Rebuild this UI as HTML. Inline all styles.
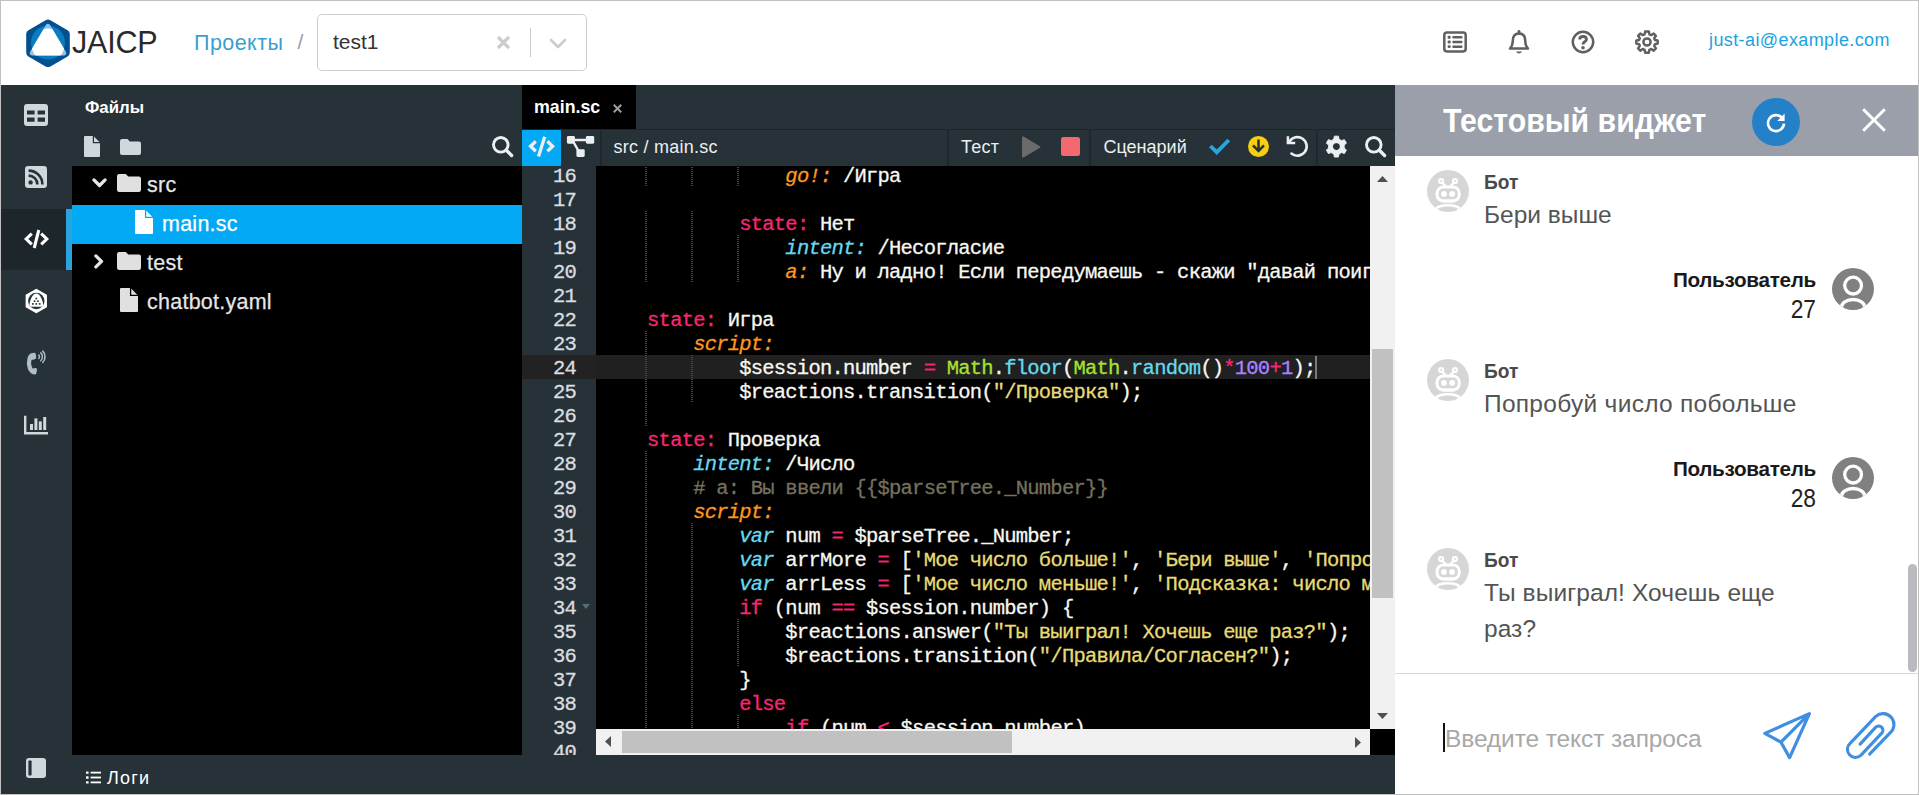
<!DOCTYPE html>
<html lang="ru">
<head>
<meta charset="utf-8">
<title>JAICP</title>
<style>
*{box-sizing:border-box;margin:0;padding:0}
html,body{width:1919px;height:795px;overflow:hidden;background:#fff}
body{position:relative;font-family:"Liberation Sans",sans-serif;color:#fff}
.abs{position:absolute}
svg{display:block;position:absolute;overflow:visible}
/* frame */
#frame{left:0;top:0;width:1919px;height:795px;border:1px solid #c1c1c1;pointer-events:none;z-index:50}
/* header */
#hdr{left:1px;top:1px;width:1917px;height:84px;background:#fff}
#brand{left:72px;top:22px;font-size:30.5px;line-height:40px;color:#2a2a2a;letter-spacing:-.2px}
#proj{left:194px;top:27.6px;font-size:21.5px;line-height:30px;color:#3a9fd0;letter-spacing:.45px}
#slash{left:297.5px;top:27px;font-size:21px;line-height:30px;color:#9aa0a5}
#sel{left:317px;top:14px;width:270px;height:57px;border:1px solid #ccc;border-radius:5px;background:#fff}
#selv{left:333px;top:27px;font-size:21px;line-height:30px;color:#333}
#selsep{left:530px;top:28px;width:1px;height:29px;background:#ccc}
#mail{left:1709px;top:27px;font-size:18px;line-height:26px;color:#1aa3e0;letter-spacing:.4px}
/* dark */
#dark{left:1px;top:85px;width:1394px;height:709px;background:#263238}
#navact{left:1px;top:209px;width:70px;height:61px;background:#1d262b}
#navbar{left:66px;top:209px;width:6px;height:61px;background:#2ba4dd}
#files{left:72px;top:166px;width:450px;height:589px;background:#000}
#ftitle{left:85px;top:95.7px;font-size:16.8px;font-weight:bold;line-height:24px;color:#fff}
#fsel{left:72px;top:205px;width:450px;height:39px;background:#03a9f4}
.fn{font-size:21.5px;line-height:28px;color:#e6e6e6;letter-spacing:.25px;-webkit-text-stroke:.25px}
/* editor */
#tab{left:522px;top:85px;width:114px;height:44px;background:#000}
#tabt{left:534px;top:95px;font-size:17.8px;font-weight:bold;line-height:24px;color:#fff}
#tabx{left:611px;top:96px;font-size:17px;line-height:24px;color:#9aa}
#tbline{left:522px;top:129px;width:873px;height:1px;background:#1c2529}
#codebtn{left:522px;top:130px;width:39px;height:36px;background:#03a9f4}
.tsep{top:130px;width:1.5px;height:36px;background:#1e282d}
.tt{top:134px;font-size:18px;line-height:26px;color:#eceff1;letter-spacing:.25px}
#ed{left:522px;top:166px;width:848px;height:589px;background:#000;overflow:hidden}
#gut{left:0;top:0;width:74px;height:589px;background:#263238}
#actg{left:0;top:189px;width:74px;height:24px;background:#222}
#actl{left:74px;top:189px;width:774px;height:24px;background:#202020}
pre{font-family:"Liberation Mono",monospace;font-size:20.5px;line-height:24px;letter-spacing:-.78px;white-space:pre;-webkit-text-stroke:.3px}
#nums{left:0;top:-.6px;width:54px;text-align:right;color:#d9dde0}
#code{left:79px;top:-.6px;color:#f8f8f2}
.k{color:#f92672}.i{color:#66d9ef;font-style:italic}.o{color:#fd971f;font-style:italic}
.s{color:#e6db74}.g{color:#a6e22e}.f{color:#66d9ef}.n{color:#ae81ff}.c{color:#75715e}
.ig{width:2px;margin-left:-.6px;background-image:linear-gradient(#45453c 50%,transparent 50%);background-size:2px 2px}
/* scrollbars */
#vsb{left:1370px;top:166px;width:25px;height:563px;background:#f1f1f1}
#vth{left:1372px;top:349px;width:21px;height:249px;background:#c1c1c1}
#hsb{left:596px;top:729px;width:774px;height:26px;background:#f1f1f1}
#hth{left:622px;top:731px;width:390px;height:22px;background:#c1c1c1}
#corner{left:1370px;top:729px;width:25px;height:26px;background:#000}
#logs{left:107px;top:764.8px;font-size:18px;line-height:26px;color:#fff;letter-spacing:1.2px}
/* widget */
#wg{left:1395px;top:85px;width:523px;height:709px;background:#fff}
#wgh{left:1395px;top:85px;width:523px;height:71px;background:#9a9fa9}
#wgt{left:1443px;top:100px;font-size:34px;font-weight:bold;line-height:40px;color:#fff;transform:scaleX(.89);transform-origin:0 0;white-space:nowrap}
#rf{left:1752px;top:98px;width:48px;height:48px;border-radius:50%;background:#2481c8}
.bn{font-size:21px;font-weight:bold;line-height:24px;color:#4a4a4a;transform:scaleX(.912);transform-origin:0 0}
.bm{font-size:24.5px;line-height:36px;color:#545454;letter-spacing:0;white-space:nowrap}
.un{font-size:20.7px;font-weight:bold;line-height:24px;color:#1a1a1a;text-align:right;width:300px;letter-spacing:-.3px}
.um{font-size:25px;line-height:30px;color:#222;text-align:right;width:300px;transform:scaleX(.91);transform-origin:100% 0}
.av{width:42px;height:42px;border-radius:50%}
#inline{left:1395px;top:673px;width:523px;height:1px;background:#d9d9d9}
#ph{left:1445px;top:722.7px;font-size:24.5px;line-height:32px;color:#a8a8a8;letter-spacing:-.1px}
#caret{left:1443px;top:723px;width:2px;height:29px;background:#111}
#wsb{left:1908px;top:564px;width:9px;height:108px;border-radius:5px;background:#b9bbc0}
</style>
</head>
<body>
<div class="abs" id="hdr"></div>
<!-- logo -->
<svg class="abs" style="left:24px;top:17px" width="48" height="52" viewBox="24 17 48 52">
<defs><clipPath id="tri"><path d="M48 21.4 L68 55.5 L28 55.5 Z"/></clipPath></defs>
<path d="M45.6 20.2 Q48 18.8 50.4 20.2 L67.6 30.2 Q69.8 31.5 69.8 34 L69.8 52.6 Q69.8 55.2 67.6 56.5 L50.4 66.4 Q48 67.8 45.6 66.4 L28.4 56.5 Q26.2 55.2 26.2 52.6 L26.2 34 Q26.2 31.5 28.4 30.2 Z" fill="#02508f"/>
<circle cx="48" cy="42.6" r="17" fill="#0b7cc0"/>
<path d="M48 26.4 L63.7 53 L32.3 53 Z" fill="#90c3ec" stroke="#90c3ec" stroke-width="5" stroke-linejoin="round"/>
<circle cx="48" cy="45" r="16.4" fill="#fff" clip-path="url(#tri)"/>
</svg>
<div class="abs" id="brand">JAICP</div>
<div class="abs" id="proj">Проекты</div>
<div class="abs" id="slash">/</div>
<div class="abs" id="sel"></div>
<div class="abs" id="selv">test1</div>
<svg class="abs" style="left:496px;top:35px" width="15" height="15" viewBox="0 0 15 15"><path d="M2 2 L13 13 M13 2 L2 13" stroke="#ccc" stroke-width="3.2" fill="none"/></svg>
<div class="abs" id="selsep"></div>
<svg class="abs" style="left:549px;top:38px" width="18" height="11" viewBox="0 0 18 11"><path d="M2 2 L9 9 L16 2" stroke="#ccc" stroke-width="2.6" fill="none" stroke-linecap="round" stroke-linejoin="round"/></svg>
<!-- header icons -->
<svg class="abs" style="left:1443px;top:31px" width="24" height="22" viewBox="0 0 24 22"><rect x="1.3" y="1.6" width="21.4" height="18.8" rx="2.6" fill="none" stroke="#606060" stroke-width="2.5"/><g fill="#606060"><rect x="4.6" y="4.8" width="3.1" height="2.9" rx="1"/><rect x="4.6" y="9.5" width="3.1" height="2.9" rx="1"/><rect x="4.6" y="14.2" width="3.1" height="2.9" rx="1"/><rect x="9.3" y="5" width="10.2" height="2.5" rx="1"/><rect x="9.3" y="9.7" width="10.2" height="2.5" rx="1"/><rect x="9.3" y="14.4" width="10.2" height="2.5" rx="1"/></g></svg>
<svg class="abs" style="left:1508px;top:30px" width="22" height="26" viewBox="0 0 22 26"><path d="M11 3.4 C6.6 3.4 4.8 6.8 4.8 10.8 C4.8 14.8 3.8 16.6 2 18.6 L20 18.6 C18.2 16.6 17.2 14.8 17.2 10.8 C17.2 6.8 15.4 3.4 11 3.4 Z" fill="none" stroke="#606060" stroke-width="2.5" stroke-linejoin="round"/><path d="M11 1.3 L11 3" stroke="#606060" stroke-width="2.8" stroke-linecap="round"/><path d="M7.8 21.4 H14.2 Q11 25.6 7.8 21.4 Z" fill="#606060"/></svg>
<svg class="abs" style="left:1571px;top:30px" width="24" height="24" viewBox="0 0 24 24"><circle cx="12" cy="12" r="10.2" fill="none" stroke="#606060" stroke-width="2.5"/><path d="M8.7 9.4 C8.7 5.6 15.4 5.6 15.4 9.4 C15.4 11.8 12 11.6 12 14.4" fill="none" stroke="#606060" stroke-width="2.9"/><circle cx="12" cy="17.7" r="1.8" fill="#606060"/></svg>
<svg class="abs" style="left:1635px;top:30px" width="24" height="24" viewBox="0 0 24 24"><path d="M10.2 1.4 L13.8 1.4 L14.4 4.3 L16.2 5.1 L18.7 3.5 L20.9 5.8 L19.2 8.2 L19.9 9.9 L22.7 10.4 L22.7 13.6 L19.9 14.2 L19.2 15.9 L20.9 18.4 L18.7 20.6 L16.2 19 L14.4 19.8 L13.8 22.7 L10.2 22.7 L9.6 19.8 L7.8 19 L5.3 20.6 L3.1 18.4 L4.8 15.9 L4.1 14.2 L1.3 13.6 L1.3 10.4 L4.1 9.9 L4.8 8.2 L3.1 5.8 L5.3 3.5 L7.8 5.1 L9.6 4.3 Z" fill="none" stroke="#606060" stroke-width="2.5" stroke-linejoin="round"/><circle cx="12" cy="12" r="3.6" fill="none" stroke="#606060" stroke-width="2.5"/></svg>
<div class="abs" id="mail">just-ai@example.com</div>
<div class="abs" id="dark"></div>
<div class="abs" id="navact"></div><div class="abs" id="navbar"></div>
<!-- nav icons -->
<svg style="left:24px;top:104px" width="24" height="22" viewBox="0 0 24 22"><path fill="#cfd8dc" fill-rule="evenodd" d="M3 0 H21 Q24 0 24 3 V19 Q24 22 21 22 H3 Q0 22 0 19 V3 Q0 0 3 0 Z M3 6.4 V10.4 H10.6 V6.4 Z M13.6 6.4 V10.4 H21 V6.4 Z M3 13.6 V17.8 H10.6 V13.6 Z M13.6 13.6 V17.8 H21 V13.6 Z"/></svg>
<svg style="left:25px;top:166px" width="22" height="22" viewBox="0 0 22 22"><rect width="22" height="22" rx="3.2" fill="#cfd8dc"/><circle cx="5.6" cy="16.4" r="2.2" fill="#263238"/><path d="M3.6 9.6 A8.8 8.8 0 0 1 12.4 18.4 M3.6 4.6 A13.8 13.8 0 0 1 17.4 18.4" fill="none" stroke="#263238" stroke-width="2.6"/></svg>
<svg style="left:24px;top:229px" width="25" height="20" viewBox="0 0 25 20"><path d="M7.8 4.6 L2.2 10 L7.8 15.4 M17.2 4.6 L22.8 10 L17.2 15.4 M14.8 1 L10.2 19" fill="none" stroke="#fff" stroke-width="3.1" stroke-linejoin="miter"/></svg>
<svg style="left:24.7px;top:288.9px" width="22.6" height="24" viewBox="0.4 0.4 23.2 25.2"><path d="M12 1.2 L22.2 7 L22.2 19 L12 24.8 L1.8 19 L1.8 7 Z" fill="#fff" stroke="#fff" stroke-width="2" stroke-linejoin="round"/><circle cx="12" cy="13" r="8.6" fill="#263238"/><path d="M12 5 C15.4 5 17.8 9.4 19.2 16.2 Q19.6 18.8 17 19 H7 Q4.4 18.8 4.8 16.2 C6.2 9.4 8.6 5 12 5 Z" fill="#fff"/><g fill="#263238"><rect x="11.1" y="9.6" width="1.8" height="1.7"/><rect x="9.3" y="12.4" width="1.8" height="1.7"/><rect x="12.9" y="12.4" width="1.8" height="1.7"/><rect x="7.5" y="15.2" width="1.8" height="1.7"/><rect x="11.1" y="15.2" width="1.8" height="1.7"/><rect x="14.7" y="15.2" width="1.8" height="1.7"/></g></svg>
<svg style="left:26px;top:350px" width="20" height="26" viewBox="0 0 20 26"><path d="M4.4 3.4 L8.2 2.8 Q9.6 2.8 9.8 4.2 L10.2 7.6 Q10.2 8.8 9 9.2 L5.6 10 Q4.2 14 6.6 18.4 L9.8 18 Q11 18.2 11 19.4 L10.4 23.2 Q10 24.8 8.4 24.6 Q4.2 23.8 2 19.2 Q0 13.8 1.4 8.2 Q2.2 4.8 4.4 3.4 Z" fill="#b0bec5"/><path d="M12.4 4.6 A2.8 2.8 0 0 1 12.4 9 M14.4 2.4 A5.8 5.8 0 0 1 14.4 11.2 M16.4 .6 A8.6 8.6 0 0 1 16.4 13" fill="none" stroke="#b0bec5" stroke-width="1.5"/></svg>
<svg style="left:24px;top:415px" width="24" height="20" viewBox="0 0 24 20"><path d="M1.2 .8 V18.2 H24" fill="none" stroke="#cfd8dc" stroke-width="2.4"/><g fill="#cfd8dc"><rect x="6" y="9" width="3" height="6"/><rect x="10.4" y="3.4" width="3" height="11.6"/><rect x="14.8" y="6.4" width="3" height="8.6"/><rect x="19.2" y="2" width="3" height="13"/></g></svg>
<svg style="left:26px;top:758px" width="20" height="20" viewBox="0 0 20 20"><rect width="20" height="20" rx="3" fill="#cfd8dc"/><rect x="2.4" y="2.4" width="3.2" height="15.2" rx=".8" fill="#263238"/></svg>
<!-- files panel -->
<div class="abs" id="files"></div>
<div class="abs" id="ftitle">Файлы</div>
<svg style="left:84px;top:136px" width="16" height="21" viewBox="0 0 16 21"><path d="M0 1 Q0 0 1 0 H9.4 L16 6.6 V20 Q16 21 15 21 H1 Q0 21 0 20 Z" fill="#cfd8dc"/><path d="M9.4 0 V6.6 H16" fill="none" stroke="#263238" stroke-width="1.2"/></svg>
<svg style="left:120px;top:139px" width="21" height="16" viewBox="0 0 21 16"><path d="M0 2 Q0 0 2 0 H7.6 L9.8 2.4 H19 Q21 2.4 21 4.4 V14 Q21 16 19 16 H2 Q0 16 0 14 Z" fill="#cfd8dc"/></svg>
<svg style="left:492px;top:135.6px" width="21" height="21" viewBox="0 0 21 21"><circle cx="8.8" cy="8.8" r="7.3" fill="none" stroke="#eceff1" stroke-width="2.9"/><path d="M14.3 14.3 L19.6 19.5" stroke="#eceff1" stroke-width="3.4" stroke-linecap="round"/></svg>
<div class="abs" id="fsel"></div>
<!-- tree -->
<svg style="left:91.5px;top:178.3px" width="15" height="10" viewBox="0 0 15 10"><path d="M1.9 1.9 L7.5 7.5 L13.1 1.9" fill="none" stroke="#e6e6e6" stroke-width="3.3" stroke-linecap="round" stroke-linejoin="round"/></svg>
<svg style="left:117px;top:174px" width="24" height="18" viewBox="0 0 24 18"><path d="M0 2.2 Q0 0 2.2 0 H8.8 L11.2 2.6 H21.8 Q24 2.6 24 4.8 V15.8 Q24 18 21.8 18 H2.2 Q0 18 0 15.8 Z" fill="#e0e0e0"/></svg>
<div class="abs fn" style="left:147px;top:171px">src</div>
<svg style="left:135px;top:210px" width="18" height="24" viewBox="0 0 18 24"><path d="M0 1 Q0 0 1 0 H10.6 L18 7.4 V23 Q18 24 17 24 H1 Q0 24 0 23 Z" fill="#fff"/><path d="M10.6 0 V7.4 H18" fill="none" stroke="#03a9f4" stroke-width="1.3"/></svg>
<div class="abs fn" style="left:162px;top:210px;color:#fff">main.sc</div>
<svg style="left:93.7px;top:254px" width="10" height="15" viewBox="0 0 10 15"><path d="M1.9 1.9 L7.5 7.4 L1.9 12.9" fill="none" stroke="#e6e6e6" stroke-width="3.3" stroke-linecap="round" stroke-linejoin="round"/></svg>
<svg style="left:117px;top:252px" width="24" height="18" viewBox="0 0 24 18"><path d="M0 2.2 Q0 0 2.2 0 H8.8 L11.2 2.6 H21.8 Q24 2.6 24 4.8 V15.8 Q24 18 21.8 18 H2.2 Q0 18 0 15.8 Z" fill="#e0e0e0"/></svg>
<div class="abs fn" style="left:147px;top:249px">test</div>
<svg style="left:120px;top:288px" width="18" height="24" viewBox="0 0 18 24"><path d="M0 1 Q0 0 1 0 H10.6 L18 7.4 V23 Q18 24 17 24 H1 Q0 24 0 23 Z" fill="#e0e0e0"/><path d="M10.6 0 V7.4 H18" fill="none" stroke="#000" stroke-width="1.3"/></svg>
<div class="abs fn" style="left:147px;top:288px">chatbot.yaml</div>
<!-- editor -->
<div class="abs" id="tab"></div>
<div class="abs" id="tabt">main.sc</div>
<svg style="left:613px;top:103.5px" width="9" height="9" viewBox="0 0 9 9"><path d="M.8 .8 L8.2 8.2 M8.2 .8 L.8 8.2" stroke="#9e9e9e" stroke-width="2" fill="none"/></svg>
<div class="abs" id="tbline"></div>
<div class="abs" id="codebtn"></div>
<div class="abs" id="ed">
<div class="abs" id="gut"></div>
<div class="abs" id="actg"></div><div class="abs" id="actl"></div>
<div class="abs ig" style="left:124px;top:-3px;height:24px"></div><div class="abs ig" style="left:124px;top:45px;height:72px"></div><div class="abs ig" style="left:124px;top:165px;height:96px"></div><div class="abs ig" style="left:124px;top:285px;height:312px"></div><div class="abs ig" style="left:170px;top:-3px;height:24px"></div><div class="abs ig" style="left:170px;top:45px;height:72px"></div><div class="abs ig" style="left:170px;top:189px;height:48px"></div><div class="abs ig" style="left:170px;top:357px;height:240px"></div><div class="abs ig" style="left:216px;top:-3px;height:24px"></div><div class="abs ig" style="left:216px;top:69px;height:48px"></div><div class="abs ig" style="left:216px;top:453px;height:48px"></div><div class="abs ig" style="left:216px;top:549px;height:48px"></div><div class="abs ig" style="left:262px;top:573px;height:24px"></div>
<pre class="abs" id="nums">16
17
18
19
20
21
22
23
24
25
26
27
28
29
30
31
32
33
34
35
36
37
38
39
40</pre>
<pre class="abs" id="code">                <span class="o">go!:</span> /Игра

            <span class="k">state:</span> Нет
                <span class="i">intent:</span> /Несогласие
                <span class="o">a:</span> Ну и ладно! Если передумаешь - скажи "давай поиграем"

    <span class="k">state:</span> Игра
        <span class="o">script:</span>
            $session.number <span class="k">=</span> <span class="g">Math</span>.<span class="f">floor</span>(<span class="g">Math</span>.<span class="f">random</span>()<span class="k">*</span><span class="n">100</span><span class="k">+</span><span class="n">1</span>);
            $reactions.transition(<span class="s">"/Проверка"</span>);

    <span class="k">state:</span> Проверка
        <span class="i">intent:</span> /Число
        <span class="c"># a: Вы ввели {{$parseTree._Number}}</span>
        <span class="o">script:</span>
            <span class="i">var</span> num <span class="k">=</span> $parseTree._Number;
            <span class="i">var</span> arrMore <span class="k">=</span> [<span class="s">'Мое число больше!'</span>, <span class="s">'Бери выше'</span>, <span class="s">'Попробуй число побольше'</span>];
            <span class="i">var</span> arrLess <span class="k">=</span> [<span class="s">'Мое число меньше!'</span>, <span class="s">'Подсказка: число меньше'</span>, <span class="s">'Попробуй число поменьше'</span>];
            <span class="k">if</span> (num <span class="k">==</span> $session.number) {
                $reactions.answer(<span class="s">"Ты выиграл! Хочешь еще раз?"</span>);
                $reactions.transition(<span class="s">"/Правила/Согласен?"</span>);
            }
            <span class="k">else</span>
                <span class="k">if</span> (num <span class="k">&lt;</span> $session.number)
                    $reactions.answer(selectRandomArg(arrMore));</pre>
<div class="abs" style="left:793px;top:190px;width:2px;height:23px;background:#7a7a7a"></div>
<svg style="left:60px;top:438px" width="8" height="5" viewBox="0 0 8 5"><path d="M0 0 H8 L4 5 Z" fill="#546e7a"/></svg>
</div>
<div class="abs" id="vsb"></div><div class="abs" id="vth"></div>
<div class="abs" id="hsb"></div><div class="abs" id="hth"></div>
<div class="abs" id="corner"></div>
<svg style="left:1377px;top:176px" width="11" height="6" viewBox="0 0 11 6"><path d="M0 6 L5.5 0 L11 6 Z" fill="#505050"/></svg>
<svg style="left:1377px;top:713px" width="11" height="6" viewBox="0 0 11 6"><path d="M0 0 L5.5 6 L11 0 Z" fill="#505050"/></svg>
<svg style="left:605px;top:736px" width="6" height="11" viewBox="0 0 6 11"><path d="M6 0 L0 5.5 L6 11 Z" fill="#505050"/></svg>
<svg style="left:1355px;top:737px" width="6" height="11" viewBox="0 0 6 11"><path d="M0 0 L6 5.5 L0 11 Z" fill="#505050"/></svg>
<!-- toolbar -->
<svg style="left:528px;top:136px" width="27" height="22" viewBox="0 0 27 22"><path d="M7.8 5.2 L2.6 10.2 L7.8 15.2 M19.4 5.2 L24.6 10.2 L19.4 15.2 M16.7 .8 L10.5 20.5" fill="none" stroke="#eceff1" stroke-width="3.3" stroke-linejoin="miter"/></svg>
<svg style="left:566px;top:136px" width="29" height="22" viewBox="0 0 29 22"><g fill="#eceff1"><rect x=".9" y="0" width="8" height="7.7" rx="1.4"/><rect x="19.9" y="0" width="8.3" height="7.7" rx="1.4"/><rect x="10.4" y="13.2" width="8.3" height="7.7" rx="1.4"/></g><path d="M8 4 H21 M7.8 6.6 L12.2 14.4" fill="none" stroke="#eceff1" stroke-width="2.3"/></svg>
<div class="abs tsep" style="left:600px"></div>
<div class="abs tt" style="left:613.5px">src / main.sc</div>
<div class="abs tsep" style="left:947px"></div>
<div class="abs tt" style="left:961px">Тест</div>
<svg style="left:1022px;top:136px" width="19" height="22" viewBox="0 0 19 22"><path d="M1.6 .6 L18 10.2 Q19 11 18 11.8 L1.6 21.4 Q0 22 0 20.4 V1.6 Q0 0 1.6 .6 Z" fill="#6b6b6b"/></svg>
<div class="abs" style="left:1061px;top:137px;width:19px;height:19px;border-radius:2.5px;background:#f4696f"></div>
<div class="abs tsep" style="left:1089px"></div>
<div class="abs tt" style="left:1103.5px;letter-spacing:0">Сценарий</div>
<svg style="left:1208px;top:138px" width="23" height="17" viewBox="0 0 23 17"><path d="M2.4 8 L8.8 14.2 L20.8 2" fill="none" stroke="#2ba6db" stroke-width="3.8"/></svg>
<svg style="left:1248.1px;top:135.7px" width="21" height="21" viewBox="0 0 21 21"><circle cx="10.5" cy="10.5" r="10.5" fill="#f7ce12"/><path d="M10.5 3.4 V14.6 M5 9.4 L10.5 15 L16 9.4" fill="none" stroke="#263238" stroke-width="2.5"/></svg>
<svg style="left:1286.2px;top:135.4px" width="22.8" height="22.8" viewBox="0 0 22.8 22.8"><path d="M3.51 6.47 A9.3 9.3 0 1 1 5.42 18.52" fill="none" stroke="#eceff1" stroke-width="2.6" stroke-linecap="round"/><path d="M1.9 1.2 V8.1 H9.2" fill="none" stroke="#eceff1" stroke-width="2.5" stroke-linecap="butt" stroke-linejoin="miter"/></svg>
<div class="abs tsep" style="left:1316px"></div>
<svg style="left:1325.8px;top:136px" width="21" height="21.4" viewBox="0 0 21 21.4"><path fill="#eceff1" fill-rule="evenodd" stroke="#eceff1" stroke-width="1" stroke-linejoin="round" d="M7.83 3.13 L8.38 0.19 L12.42 0.19 L12.97 3.13 L15.58 4.64 L18.40 3.65 L20.42 7.15 L18.15 9.09 L18.15 12.11 L20.42 14.05 L18.40 17.55 L15.58 16.56 L12.97 18.07 L12.42 21.01 L8.38 21.01 L7.83 18.07 L5.22 16.56 L2.40 17.55 L0.38 14.05 L2.65 12.11 L2.65 9.09 L0.38 7.15 L2.40 3.65 L5.22 4.64 Z M10.4 7 A3.6 3.6 0 1 0 10.4 14.2 A3.6 3.6 0 1 0 10.4 7 Z"/><circle cx="10.4" cy="10.6" r="3.3" fill="#263238"/></svg>
<svg style="left:1365.3px;top:136px" width="21" height="21" viewBox="0 0 21 21"><circle cx="8.8" cy="8.8" r="7.3" fill="none" stroke="#eceff1" stroke-width="2.9"/><path d="M14.3 14.3 L19.6 19.5" stroke="#eceff1" stroke-width="3.4" stroke-linecap="round"/></svg>
<!-- logs -->
<svg style="left:86px;top:771px" width="15" height="13" viewBox="0 0 15 13"><g fill="#fff"><rect x="0" y=".4" width="2.6" height="2.4" rx=".5"/><rect x="0" y="5.3" width="2.6" height="2.4" rx=".5"/><rect x="0" y="10.2" width="2.6" height="2.4" rx=".5"/><rect x="4.6" y=".7" width="10.4" height="1.8"/><rect x="4.6" y="5.6" width="10.4" height="1.8"/><rect x="4.6" y="10.5" width="10.4" height="1.8"/></g></svg>
<div class="abs" id="logs">Логи</div>
<div class="abs" id="wg"></div>
<div class="abs" id="wgh"></div>
<div class="abs" id="wgt">Тестовый виджет</div>
<div class="abs" id="rf"></div>
<svg style="left:1764px;top:111px" width="24" height="24" viewBox="0 0 24 24"><path d="M18.2 7 A8 8 0 1 0 20 12.6" fill="none" stroke="#fff" stroke-width="2.6"/><path d="M20.6 2.6 V10 H13.2 Z" fill="#fff"/></svg>
<svg style="left:1862px;top:107.5px" width="24" height="24" viewBox="0 0 24 24"><path d="M1.2 1.2 L22.8 22.8 M22.8 1.2 L1.2 22.8" stroke="#fff" stroke-width="3" fill="none"/></svg>
<svg style="left:1427px;top:169.8px" width="42" height="42" viewBox="0 0 42 42"><defs><clipPath id="bc1"><circle cx="21" cy="21" r="21"/></clipPath></defs><circle cx="21" cy="21" r="21" fill="#d6d6d6"/><g fill="none" stroke="#fff"><circle cx="14.1" cy="11" r="2" stroke-width="2.2"/><circle cx="28" cy="11" r="2" stroke-width="2.2"/><path d="M15.6 13 L18.8 16.6 M26.4 13 L23.2 16.6" stroke-width="2.4"/></g><rect x="8.5" y="15.5" width="25.2" height="17.2" rx="8" fill="#fff"/><rect x="11.6" y="18.4" width="19.2" height="10.9" rx="4.6" fill="#d6d6d6"/><circle cx="16.9" cy="23.9" r="2.9" fill="#fff"/><circle cx="25.1" cy="23.9" r="2.9" fill="#fff"/><g clip-path="url(#bc1)"><ellipse cx="20.9" cy="38.4" rx="12.7" ry="4.5" fill="#fff"/><ellipse cx="20.9" cy="39.3" rx="10" ry="2.7" fill="#d6d6d6"/></g></svg>
<div class="abs bn" style="left:1484px;top:170px">Бот</div>
<div class="abs bm" style="left:1484px;top:197px;letter-spacing:0">Бери выше</div>
<div class="abs un" style="left:1516px;top:268px">Пользователь</div>
<div class="abs um" style="left:1516px;top:293.7px">27</div>
<svg style="left:1832px;top:267.7px" width="42" height="42" viewBox="0 0 42 42"><defs><clipPath id="uc1"><circle cx="21" cy="21" r="21"/></clipPath></defs><circle cx="21" cy="21" r="21" fill="#808080"/><circle cx="21.1" cy="17.6" r="8.4" fill="none" stroke="#fff" stroke-width="3.3"/><ellipse cx="21.1" cy="39.7" rx="11.8" ry="8.2" fill="none" stroke="#fff" stroke-width="3.3" clip-path="url(#uc1)"/></svg><svg style="left:1427px;top:358.8px" width="42" height="42" viewBox="0 0 42 42"><defs><clipPath id="bc2"><circle cx="21" cy="21" r="21"/></clipPath></defs><circle cx="21" cy="21" r="21" fill="#d6d6d6"/><g fill="none" stroke="#fff"><circle cx="14.1" cy="11" r="2" stroke-width="2.2"/><circle cx="28" cy="11" r="2" stroke-width="2.2"/><path d="M15.6 13 L18.8 16.6 M26.4 13 L23.2 16.6" stroke-width="2.4"/></g><rect x="8.5" y="15.5" width="25.2" height="17.2" rx="8" fill="#fff"/><rect x="11.6" y="18.4" width="19.2" height="10.9" rx="4.6" fill="#d6d6d6"/><circle cx="16.9" cy="23.9" r="2.9" fill="#fff"/><circle cx="25.1" cy="23.9" r="2.9" fill="#fff"/><g clip-path="url(#bc2)"><ellipse cx="20.9" cy="38.4" rx="12.7" ry="4.5" fill="#fff"/><ellipse cx="20.9" cy="39.3" rx="10" ry="2.7" fill="#d6d6d6"/></g></svg>
<div class="abs bn" style="left:1484px;top:359px">Бот</div>
<div class="abs bm" style="left:1484px;top:386px;letter-spacing:.29px">Попробуй число побольше</div>
<div class="abs un" style="left:1516px;top:457px">Пользователь</div>
<div class="abs um" style="left:1516px;top:482.7px">28</div>
<svg style="left:1832px;top:456.7px" width="42" height="42" viewBox="0 0 42 42"><defs><clipPath id="uc2"><circle cx="21" cy="21" r="21"/></clipPath></defs><circle cx="21" cy="21" r="21" fill="#808080"/><circle cx="21.1" cy="17.6" r="8.4" fill="none" stroke="#fff" stroke-width="3.3"/><ellipse cx="21.1" cy="39.7" rx="11.8" ry="8.2" fill="none" stroke="#fff" stroke-width="3.3" clip-path="url(#uc2)"/></svg><svg style="left:1427px;top:547.8px" width="42" height="42" viewBox="0 0 42 42"><defs><clipPath id="bc3"><circle cx="21" cy="21" r="21"/></clipPath></defs><circle cx="21" cy="21" r="21" fill="#d6d6d6"/><g fill="none" stroke="#fff"><circle cx="14.1" cy="11" r="2" stroke-width="2.2"/><circle cx="28" cy="11" r="2" stroke-width="2.2"/><path d="M15.6 13 L18.8 16.6 M26.4 13 L23.2 16.6" stroke-width="2.4"/></g><rect x="8.5" y="15.5" width="25.2" height="17.2" rx="8" fill="#fff"/><rect x="11.6" y="18.4" width="19.2" height="10.9" rx="4.6" fill="#d6d6d6"/><circle cx="16.9" cy="23.9" r="2.9" fill="#fff"/><circle cx="25.1" cy="23.9" r="2.9" fill="#fff"/><g clip-path="url(#bc3)"><ellipse cx="20.9" cy="38.4" rx="12.7" ry="4.5" fill="#fff"/><ellipse cx="20.9" cy="39.3" rx="10" ry="2.7" fill="#d6d6d6"/></g></svg>
<div class="abs bn" style="left:1484px;top:548px">Бот</div>
<div class="abs bm" style="left:1484px;top:575px"><span style="letter-spacing:.1px">Ты выиграл! Хочешь еще</span><br><span style="letter-spacing:.07px">раз?</span></div>
<div class="abs" id="wsb"></div>
<div class="abs" id="inline"></div>
<div class="abs" id="ph">Введите текст запроса</div>
<div class="abs" id="caret"></div>
<svg style="left:1762px;top:711px" width="50" height="50" viewBox="0 0 50 50"><path d="M47.4 2.6 L2.8 22.4 L19 31.2 L27.6 46.6 Z M19 31.2 L47.4 2.6" fill="none" stroke="#3f8ee0" stroke-width="3.2" stroke-linejoin="round"/></svg>
<svg style="left:1846px;top:711px" width="50" height="50" viewBox="0 0 50 50"><path d="M23.6 43.1 L44.3 21.7 A10.9 10.9 0 0 0 29.8 5.4 L4.1 32.4 A8 8 0 0 0 14.8 44.4 L35.5 22.4 A4.2 4.2 0 0 0 29.8 16.1 L14.1 33.1" fill="none" stroke="#3f8ee0" stroke-width="3.1" stroke-linecap="round" stroke-linejoin="round"/></svg>
<div class="abs" id="frame"></div>
</body>
</html>
